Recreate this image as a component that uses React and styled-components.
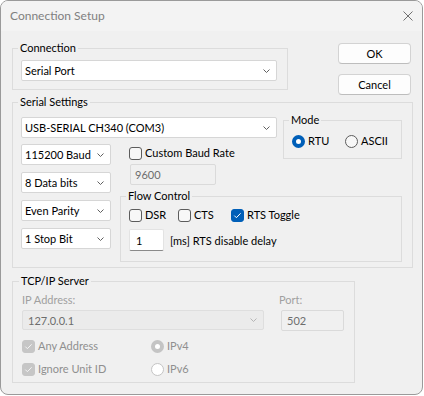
import React from "react";
import styled, { createGlobalStyle } from "styled-components";

const GlobalStyle = createGlobalStyle`
  body {
    margin: 0;
    background: #ffffff;
    font-family: Lato, "Liberation Sans", sans-serif;
    font-size: 11px;
    color: #000000;
  }
`;

const Window = styled.div`
  width: 423px;
  height: 395px;
  box-sizing: border-box;
  border: 1px solid #9a9a9a;
  border-radius: 8px;
  overflow: hidden;
  background: #f0f0f0;
  display: flex;
  flex-direction: column;
`;

const TitleBar = styled.div`
  height: 30px;
  flex: none;
  display: flex;
  align-items: center;
  justify-content: space-between;
  padding: 0 9px 0 9px;
  background: #f3f3f3;
  color: #808080;
  font-size: 12px;
  line-height: 16px;
`;

const CloseIcon = styled.svg`
  display: block;
`;

const Body = styled.div`
  padding: 9px 9px 11px 11px;
  display: flex;
  flex-direction: column;
  gap: 5px;
`;

const TopRow = styled.div`
  display: flex;
  align-items: flex-start;
  gap: 50px;
  margin-bottom: -1px;
`;

const Group = styled.fieldset`
  margin: 0;
  min-width: 0;
  box-sizing: border-box;
  border: 1px solid #dcdcdc;
  width: ${(p) => p.$w || "auto"};
  padding: ${(p) => p.$pad};
  grid-area: ${(p) => p.$area || "auto"};
  align-self: start;
  margin-top: ${(p) => p.$mt || "0"};
`;

const GroupLabel = styled.legend`
  padding: 0 2px;
  margin-left: -3px;
  line-height: 16px;
  font-size: 11px;
  color: #000000;
`;

const Combo = styled.div`
  width: ${(p) => p.$w};
  height: ${(p) => p.$h || "21px"};
  box-sizing: border-box;
  display: flex;
  align-items: center;
  justify-content: space-between;
  padding: 0 6px 0 ${(p) => p.$pl || "3px"};
  border: 1px solid ${(p) => (p.$disabled ? "#dedede" : "#d6d6d6")};
  border-radius: 2px;
  background: ${(p) => (p.$disabled ? "#ebebeb" : "#ffffff")};
  color: ${(p) => (p.$disabled ? "#6d6d6d" : "#000000")};
  margin-top: ${(p) => p.$mt || "0"};
  grid-area: ${(p) => p.$area || "auto"};
  white-space: nowrap;
`;

const Chevron = ({ color = "#606060" }) => (
  <svg width="7" height="4" viewBox="0 0 7 4">
    <polyline
      points="0.5,0.5 3.5,3.5 6.5,0.5"
      fill="none"
      stroke={color}
      strokeWidth="1"
    />
  </svg>
);

const ButtonColumn = styled.div`
  display: flex;
  flex-direction: column;
  gap: 10px;
  margin-top: 3px;
  margin-bottom: -5px;
`;

const Button = styled.button`
  width: 73px;
  height: 21px;
  padding: 0;
  border: 1px solid #d3d3d3;
  border-bottom-color: #bdbdbd;
  border-radius: 4px;
  background: #fdfdfd;
  font: inherit;
  font-size: 11px;
  color: #000000;
`;

const SerialGrid = styled.div`
  display: grid;
  grid-template-columns: 90px 9px 156px 7px 119px;
  grid-template-areas:
    "port port port . mode"
    "line . custom custom mode"
    "line . flow flow flow";
  align-items: start;
`;

const LineStack = styled.div`
  grid-area: line;
  display: flex;
  flex-direction: column;
  gap: 7px;
  margin-top: 6px;
`;

const CustomBaud = styled.div`
  grid-area: custom;
  display: flex;
  flex-direction: column;
  gap: 3px;
  margin-top: 7px;
  padding-left: 9px;
`;

const CheckItem = styled.label`
  display: flex;
  align-items: center;
  gap: 3px;
  line-height: 16px;
  height: 16px;
  width: ${(p) => p.$w || "auto"};
  flex: none;
  white-space: nowrap;
  color: ${(p) => (p.$disabled ? "#8f8f8f" : "#000000")};
`;

const Box = styled.span`
  width: 13px;
  height: 13px;
  box-sizing: border-box;
  flex: none;
  border-radius: 3px;
  display: flex;
  align-items: center;
  justify-content: center;
  border: 1px solid
    ${(p) =>
      p.$disabled ? "#c6c6c6" : p.$checked ? "#005fb8" : "#5c5c5c"};
  background: ${(p) =>
    p.$checked ? (p.$disabled ? "#c6c6c6" : "#005fb8") : "#f7f7f7"};
`;

const RadioDot = styled.span`
  width: 13px;
  height: 13px;
  box-sizing: border-box;
  flex: none;
  border-radius: 50%;
  border: ${(p) =>
    p.$checked
      ? `4px solid ${p.$disabled ? "#c4c4c4" : "#005fb8"}`
      : `1px solid ${p.$disabled ? "#c4c4c4" : "#5c5c5c"}`};
  background: ${(p) => (p.$checked || p.$disabled ? "#ffffff" : "#f7f7f7")};
`;

const TextField = styled.div`
  width: ${(p) => p.$w};
  height: ${(p) => p.$h || "21px"};
  box-sizing: border-box;
  display: flex;
  align-items: center;
  padding-left: ${(p) => p.$pl || "4px"};
  margin-left: ${(p) => p.$ml || "0"};
  margin-top: ${(p) => p.$mt || "0"};
  border: 1px solid ${(p) => (p.$disabled ? "#dadada" : "#e3e3e3")};
  border-bottom-color: ${(p) => (p.$disabled ? "#dadada" : "#8a8a8a")};
  border-radius: 2px;
  background: ${(p) => (p.$disabled ? "#f0f0f0" : "#ffffff")};
  color: ${(p) => (p.$disabled ? "#6d6d6d" : "#000000")};
  flex: none;
`;

const RadioRow = styled.div`
  display: flex;
`;

const FlowChecks = styled.div`
  display: flex;
`;

const DelayRow = styled.div`
  display: flex;
  align-items: center;
  gap: 6px;
  margin-top: 6px;
`;

const AddrRow = styled.div`
  display: flex;
  gap: 15px;
`;

const Field = styled.div`
  display: flex;
  flex-direction: column;
  gap: 2px;
`;

const FieldLabel = styled.span`
  line-height: 16px;
  color: #a0a0a0;
`;

const Options = styled.div`
  display: grid;
  grid-template-columns: 129px auto;
  row-gap: 7px;
  margin-top: 7px;
`;

const Mark = ({ color = "#ffffff" }) => (
  <svg width="11" height="11" viewBox="0 0 11 11">
    <polyline
      points="2.3,5.6 4.4,7.7 8.6,3.3"
      fill="none"
      stroke={color}
      strokeWidth="1"
    />
  </svg>
);

const Check = ({ label, checked, disabled, w }) => (
  <CheckItem $w={w} $disabled={disabled}>
    <Box $checked={checked} $disabled={disabled}>
      {checked && <Mark color={disabled ? "#f4f4f4" : "#ffffff"} />}
    </Box>
    {label}
  </CheckItem>
);

const Radio = ({ label, checked, disabled, w }) => (
  <CheckItem $w={w} $disabled={disabled}>
    <RadioDot $checked={checked} $disabled={disabled} />
    {label}
  </CheckItem>
);

const Select = ({ value, w, h, area, mt, disabled, pl }) => (
  <Combo $w={w} $h={h} $area={area} $mt={mt} $disabled={disabled} $pl={pl}>
    <span>{value}</span>
    <Chevron color={disabled ? "#b5b5b5" : "#606060"} />
  </Combo>
);

export default function App() {
  return (
    <>
      <GlobalStyle />
      <Window>
        <TitleBar>
          <span>Connection Setup</span>
          <CloseIcon width="10" height="10" viewBox="0 0 10 10">
            <line x1="0.5" y1="0.5" x2="9.5" y2="9.5" stroke="#707070" />
            <line x1="9.5" y1="0.5" x2="0.5" y2="9.5" stroke="#707070" />
          </CloseIcon>
        </TitleBar>
        <Body>
          <TopRow>
            <Group $w="276px" $pad="4px 10px 8px 8px">
              <GroupLabel>Connection</GroupLabel>
              <Select value="Serial Port" w="256px" />
            </Group>
            <ButtonColumn>
              <Button>OK</Button>
              <Button>Cancel</Button>
            </ButtonColumn>
          </TopRow>

          <Group $pad="2px 10px 5px 8px">
            <GroupLabel>Serial Settings</GroupLabel>
            <SerialGrid>
              <Select
                value="USB-SERIAL CH340 (COM3)"
                w="256px"
                area="port"
                mt="5px"
              />
              <Group $area="mode" $w="119px" $pad="5px 8px 9px 8px">
                <GroupLabel>Mode</GroupLabel>
                <RadioRow>
                  <Radio label="RTU" checked w="53px" />
                  <Radio label="ASCII" />
                </RadioRow>
              </Group>
              <LineStack>
                <Select value="115200 Baud" w="90px" />
                <Select value="8 Data bits" w="90px" />
                <Select value="Even Parity" w="90px" />
                <Select value="1 Stop Bit" w="90px" />
              </LineStack>
              <CustomBaud>
                <Check label="Custom Baud Rate" />
                <TextField $w="86px" $ml="1px" $disabled>
                  9600
                </TextField>
              </CustomBaud>
              <Group $area="flow" $mt="3px" $pad="3px 8px 10px 8px">
                <GroupLabel>Flow Control</GroupLabel>
                <FlowChecks>
                  <Check label="DSR" w="49px" />
                  <Check label="CTS" w="53px" />
                  <Check label="RTS Toggle" checked />
                </FlowChecks>
                <DelayRow>
                  <TextField $w="35px" $h="22px" $pl="6px">
                    1
                  </TextField>
                  <span>[ms] RTS disable delay</span>
                </DelayRow>
              </Group>
            </SerialGrid>
          </Group>

          <Group $pad="3px 10px 5px 9px">
            <GroupLabel>TCP/IP Server</GroupLabel>
            <AddrRow>
              <Field>
                <FieldLabel>IP Address:</FieldLabel>
                <Select
                  value="127.0.0.1"
                  w="242px"
                  h="20px"
                  pl="5px"
                  disabled
                />
              </Field>
              <Field>
                <FieldLabel>Port:</FieldLabel>
                <TextField $w="63px" $ml="2px" $pl="5px" $disabled>
                  502
                </TextField>
              </Field>
            </AddrRow>
            <Options>
              <Check label="Any Address" checked disabled />
              <Radio label="IPv4" checked disabled />
              <Check label="Ignore Unit ID" checked disabled />
              <Radio label="IPv6" disabled />
            </Options>
          </Group>
        </Body>
      </Window>
    </>
  );
}
